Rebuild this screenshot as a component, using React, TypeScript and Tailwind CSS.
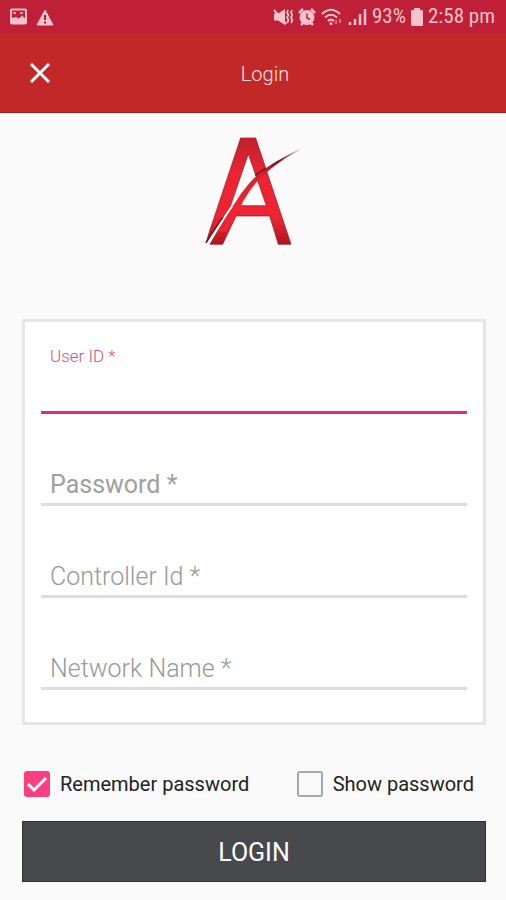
import { useState } from "react";
import type { ReactNode } from "react";

type FieldProps = {
  id: string;
  label: string;
  type?: string;
  active?: boolean;
  weight?: string;
};

function StatusBar() {
  return (
    <div className="flex h-[34px] items-center justify-between bg-[#bf1f37] pl-2 pr-[11px] text-[#f6c3cc]">
      <div className="flex items-center gap-2">
        <svg width="20" height="18" viewBox="0 0 20 18" fill="none" stroke="currentColor">
          <rect x="3" y="1.5" width="15" height="14" rx="1" strokeWidth="2" />
          <path d="M4 10l4-1 3 1.5 3-3 3 3V15H4z" fill="currentColor" stroke="none" />
          <path d="M5 5h3M12 5h3" strokeWidth="1.5" />
        </svg>
        <svg width="18" height="17" viewBox="0 0 18 17" fill="none">
          <path d="M9 1L17 16H1z" fill="currentColor" stroke="currentColor" strokeLinejoin="round" />
          <path d="M9 6v5M9 12.5v2" stroke="#a31c30" strokeWidth="2" />
        </svg>
      </div>

      <div className="flex items-center gap-[5px] font-['Roboto_Condensed','Roboto',sans-serif] text-[21px]">
        {/* Muted / vibrate */}
        <svg width="20" height="18" viewBox="0 0 20 18" fill="none" stroke="currentColor">
          <path d="M1 5.5h4L12 1v16l-7-4.5H1z" fill="currentColor" stroke="none" />
          <path d="M1 2l12 14" strokeWidth="2" />
          <path d="M15 2l-1 2.5 1.5 2.5L14 9.5l1.5 2.5-1.5 3M19 2l-1 2.5L19.500 7 18 9.5l1.5 2.5-1.5 3" strokeWidth="1.8" />
        </svg>
        {/* Alarm */}
        <svg width="18" height="18" viewBox="0 0 18 18" fill="none" stroke="currentColor">
          <circle cx="9" cy="9.5" r="7" fill="currentColor" />
          <path d="M1 5l4-4M17 5l-4-4M3 17l2-2M15 17l-2-2" strokeWidth="2.5" />
          <path d="M9 5.5V10l3 1.5" stroke="#bf1f37" strokeWidth="1.5" />
        </svg>
        {/* Wifi */}
        <svg width="22" height="18" viewBox="0 0 22 18" fill="none" stroke="currentColor" strokeWidth="2">
          <path d="M1 6Q10-2.5 19 6M4 9.5Q10 4 16 9.5M7 13Q10 10.2 13 13" />
          <circle cx="10" cy="15.5" r="1.5" fill="currentColor" stroke="none" />
          <path d="M15 12v4M19 11v4" stroke="#dc6b7d" />
        </svg>
        {/* Signal */}
        <svg width="19" height="18" viewBox="0 0 19 18" fill="none" stroke="currentColor" strokeWidth="2.5">
          <path d="M2 14v3M7 11v6M12 6v11M17 1v16" />
        </svg>
        <span>93%</span>
        <svg width="12" height="18" viewBox="0 0 12 18" fill="currentColor">
          <path d="M3 0h6v2h2q1 0 1 1v14q0 1-1 1H1q-1 0-1-1V3q0-1 1-1h2z" />
        </svg>
        <span>2:58 pm</span>
      </div>
    </div>
  );
}

function Logo() {
  return (
    <svg width="130" height="130" viewBox="0 0 390 390" role="img" aria-label="Logo">
      <defs>
        <linearGradient id="body" gradientUnits="userSpaceOnUse" x1="0" y1="39" x2="0" y2="358">
          <stop offset="0" stopColor="#c3202c" />
          <stop offset="0.35" stopColor="#ee2433" />
          <stop offset="0.75" stopColor="#ee2433" />
          <stop offset="1" stopColor="#b0161f" />
        </linearGradient>
        <linearGradient id="swoosh" gradientUnits="userSpaceOnUse" x1="140" y1="230" x2="329" y2="73">
          <stop offset="0" stopColor="#ec2433" />
          <stop offset="0.45" stopColor="#d51f2c" />
          <stop offset="0.7" stopColor="#7d1620" />
          <stop offset="1" stopColor="#b79ca0" />
        </linearGradient>
      </defs>
      {/* Right leg and crossbar */}
      <path
        d="M152 39H197L303 358H265L239 273H138L98 358H60C82 318 104 278 130 242H229L175 87Z"
        fill="url(#body)"
        stroke="#8d1720"
        strokeWidth="2"
      />
      {/* Left leg, tapering to the tip */}
      <path
        d="M152 39L55 330L48 354C74 316 97 279 121 244L175 87L197 39Z"
        fill="url(#body)"
      />
      <path d="M152 39L55 330L48 354C74 316 97 279 121 244L175 87" fill="none" stroke="#8d1720" strokeWidth="2" />
      <path d="M48 354C68 320 84 297 98 277" fill="none" stroke="#6f1117" strokeWidth="4" />
      {/* Swoosh */}
      <path d="M196 151L226 130" stroke="#5b1218" strokeWidth="4" />
      <path
        d="M130 242C155 202 175 175 200 152C240 118 284 94 329 73C289 97 249 123 209 161C184 188 166 217 152 243L138 273L110 320L84 320Z"
        fill="url(#swoosh)"
      />
      <path d="M226 131L329 74" fill="none" stroke="#7d1620" strokeOpacity="0.3" strokeWidth="2" />
      <path d="M54 358C80 318 101 280 127 243" fill="none" stroke="#fafafa" strokeWidth="5" />
    </svg>
  );
}

function Field({ id, label, type = "text", active = false, weight = "font-light" }: FieldProps) {
  return (
    <div className="relative flex h-[92px] items-end">
      <label
        htmlFor={id}
        className={
          active
            ? "absolute left-[9px] top-6 text-[17px] leading-5 font-light text-[#d14f86]"
            : `absolute left-[9px] bottom-[5px] text-[25px] leading-8 ${weight}`
        }
      >
        {label}
      </label>
      <input
        id={id}
        type={type}
        className={`h-12 w-full bg-transparent px-[9px] text-2xl outline-none ${
          active ? "border-b-3 border-[#dc2d7e]" : "border-b-3 border-[#dddddd]"
        }`}
      />
    </div>
  );
}

type CheckProps = {
  checked: boolean;
  onChange: (checked: boolean) => void;
  children: ReactNode;
};

function Check({ checked, onChange, children }: CheckProps) {
  return (
    <label className="flex items-center gap-[10px] text-xl text-[#222222]">
      <span className="grid">
        <input
          type="checkbox"
          checked={checked}
          onChange={(e) => onChange(e.target.checked)}
          className="col-start-1 row-start-1 size-[26px] appearance-none rounded-[3px] border-2 border-[#a8a8a8] checked:border-[#fc3f80] checked:bg-[#fc3f80]"
        />
        {checked && (
          <svg viewBox="0 0 26 26" className="pointer-events-none col-start-1 row-start-1 size-[26px]" fill="none">
            <path d="M4 13l6 6L22 7" stroke="white" strokeWidth="3" />
          </svg>
        )}
      </span>
      {children}
    </label>
  );
}

export default function App() {
  const [remember, setRemember] = useState(true);
  const [show, setShow] = useState(false);

  return (
    <div className="min-h-screen bg-[#fafafa] font-['Roboto',sans-serif]">
      <StatusBar />

      {/* Header */}
      <header className="grid h-[79px] grid-cols-[80px_1fr_56px] items-center border-b border-[#a51c1f] bg-[#c32828]">
        <button type="button" aria-label="Close" className="flex size-full items-center justify-center">
          <svg width="20" height="20" viewBox="0 0 20 20" fill="none">
            <path d="M1 1l18 18M19 1L1 19" stroke="white" strokeWidth="3" />
          </svg>
        </button>
        <h1 className="pt-[2px] text-center text-xl font-light text-[#fbe4e4]">Login</h1>
      </header>

      <div className="flex justify-center pt-3 pb-16 pl-1">
        <Logo />
      </div>

      {/* Login form */}
      <form className="pr-5 pl-[22px]" onSubmit={(e) => e.preventDefault()}>
        <div className="border-3 border-[#e6e6e6] bg-white px-4 pb-8">
          <Field id="user" label="User ID *" active />
          <Field
            id="password"
            label="Password *"
            type={show ? "text" : "password"}
            weight="font-normal text-[#a0a0a0]"
          />
          <Field id="controller" label="Controller Id *" weight="font-light text-[#999999]" />
          <Field id="network" label="Network Name *" weight="font-light text-[#999999]" />
        </div>

        <div className="flex h-24 items-center justify-between pt-[22px] pr-3 pl-[2px]">
          <Check checked={remember} onChange={setRemember}>
            Remember password
          </Check>
          <Check checked={show} onChange={setShow}>
            Show password
          </Check>
        </div>

        <button
          type="submit"
          className="h-[61px] w-full border border-[#303133] bg-[#48494c] pt-[2px] text-[25px] text-white"
        >
          LOGIN
        </button>
      </form>
    </div>
  );
}
